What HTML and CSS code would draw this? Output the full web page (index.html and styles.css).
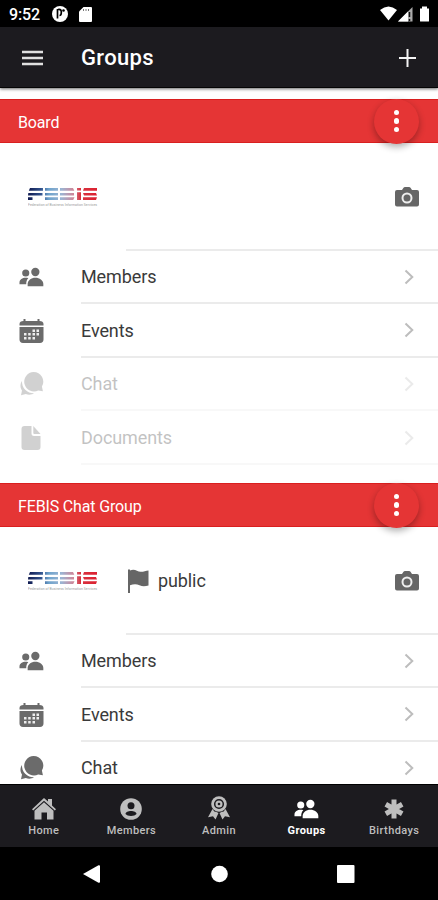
FILE: index.html
```html
<!DOCTYPE html>
<html lang="en">
<head>
<meta charset="utf-8">
<title>Groups</title>
<link rel="stylesheet" href="styles.css">
</head>
<body>
<svg class="defs" width="0" height="0" aria-hidden="true">
  <defs>
    <linearGradient id="brand" gradientUnits="userSpaceOnUse" x1="0" y1="0" x2="70" y2="0">
      <stop offset="0" stop-color="#101a50"/><stop offset=".18" stop-color="#2f4f8a"/><stop offset=".3" stop-color="#6ea3cc"/><stop offset=".48" stop-color="#9cb4d2"/><stop offset=".65" stop-color="#cf8698"/><stop offset=".75" stop-color="#d83440"/><stop offset="1" stop-color="#dc2030"/>
    </linearGradient>
    <symbol id="people" viewBox="0 0 26 20">
      <circle cx="7" cy="5.8" r="3.7"/><path d="M.5 17.500v-1.800c0-3 3-4.900 6.500-4.900 1 0 2 .2 2.700.400C8.200 12.600 7.500 14.500 7.500 17.500z"/>
      <circle cx="17" cy="4.800" r="4.300"/><path d="M9 19.500v-2.200c0-4 3.700-6.600 8-6.600s8.300 2.600 8.300 6.600v2.200z"/>
    </symbol>
    <symbol id="calendar" viewBox="0 0 24 24">
      <path d="M4 0h2v2h12V0h2v2c2.500 0 4 1 4 3v1.500H0V5c0-2 1.500-3 4-3zM0 8h24v12.500c0 2-1.300 3.500-3.500 3.500h-17C1.300 24 0 22.500 0 20.500z"/>
      <path class="cutout" d="M13 10.500h2.500V13H13zm4 0h2.500V13H17zM4.500 14H7v2.500H4.500zm4.200 0h2.500v2.500H8.700zm4.300 0h2.500v2.500H13zm4 0h2.500v2.500H17zM4.500 18H7v2.500H4.500zm4.200 0h2.500v2.500H8.700zm4.300 0h2.500v2.500H13z"/>
    </symbol>
    <symbol id="chat" viewBox="0 0 24 24">
      <path d="M14 0a9.700 9.700 0 0 1 8.400 14.600l1 4.700-4.700-.9A9.700 9.700 0 1 1 14 0z"/>
      <path d="M2.500 9a11.300 11.300 0 0 0 12 12.200c-2.500 1.700-5.600 1.900-8.200.7l-4.800 1.300 1-4.800C.3 15.300.7 11.500 2.500 9z"/>
    </symbol>
    <symbol id="document" viewBox="0 0 20 24">
      <path d="M3 0h7v7.500c0 1.500.8 2.500 2.500 2.500H19v11c0 2-1 3-3 3H3c-2 0-3-1-3-3V3c0-2 1-3 3-3z"/><path d="M11.800 0 19 8h-6c-.8 0-1.200-.4-1.200-1.200z"/>
    </symbol>
    <symbol id="camera" viewBox="0 0 24 20">
      <path d="M2 3h5l1.500-2.200Q9 0 10 0h4q1 0 1.500.800L17 3h5q2 0 2 2v12.500q0 2-2 2H2q-2 0-2-2V5q0-2 2-2z"/><circle class="ring" cx="12" cy="11" r="4.500"/>
    </symbol>
    <symbol id="chevron" viewBox="0 0 10 16"><path class="stroke" d="m1.500 1.500 6.800 6.500-6.800 6.500"/></symbol>
    <symbol id="logo" viewBox="0 0 72 21">
      <g fill="url(#brand)">
        <path d="M2 1h13v2.700H.800zM.300 6h14.200v2.400H0zM0 10.200h4.500v2.700H0zM17 1h13v2.700H17zM17 6h13v2.400H17zM17 10.200h13v2.700H17zM32 1h13l1.300 2.700H32zM32 6h14v2.400H32zM32 10.200h14.500l-1.300 2.700H32zM49 1h4v2.500h-4zM49 5.300h4v7.600h-4zM56 1h13v2.700H55zM55 6h13l1 2.400H56zM55 10.200h14l-1 2.700H55z"/>
      </g>
      <text class="tagline" x="0" y="18.500" textLength="69">Federation of Business Information Services</text>
    </symbol>
  </defs>
</svg>

<div class="phone">
  <div class="status">
    <span class="time">9:52</span>
    <svg width="16" height="16" viewBox="0 0 16 16"><circle cx="8" cy="8" r="8" fill="#fff"/><path d="M5.500 3v9.500M6 3.500c3-.5 3.500 1 3.300 3.500S8 9.500 7.500 9.500" fill="none" stroke="#000" stroke-width="1.700"/><circle cx="11.500" cy="4.500" r="1.300"/></svg>
    <svg class="sd" width="13" height="15" viewBox="0 0 13 15"><path d="M4.500 0H12q1 0 1 1v13q0 1-1 1H1q-1 0-1-1V4.500z" fill="#fff"/><path d="M4.500 2v2M7 2v2M9.500 2v2" stroke="#777"/></svg>
    <svg class="signals" width="50" height="16" viewBox="0 0 50 16"><path d="M0 4q8.500-7 17 0L8.500 14.500z" fill="#fff"/><path d="M18 15.500 32.500 1v14.500z" fill="#aaa"/><path d="M18 15.500 28 5.500v10z" fill="#fff"/><path d="M29.500 6v5m0 2v2" stroke="#111" stroke-width="1.500"/><path d="M40 2.500h2V.5h5v2h2V15q0 .5-.5.500h-8q-.5 0-.5-.500z" fill="#fff"/></svg>
  </div>

  <header class="bar">
    <svg class="menu" width="21" height="16" viewBox="0 0 21 16"><path d="M0 2h21M0 8h21M0 14h21" stroke="#e0e0e0" stroke-width="2.600"/></svg>
    <h1>Groups</h1>
    <svg class="add" width="17" height="18" viewBox="0 0 17 18"><path d="M0 9h17M8.500 0v18" stroke="#f4f4f4" stroke-width="2"/></svg>
  </header>

  <main class="content">
    <section class="group">
      <div class="group-head"><h2>Board</h2><button class="fab" aria-label="Options"><i></i><i></i><i></i></button></div>
      <div class="summary"><svg class="logo"><use href="#logo"/></svg><div class="info"><svg class="camera"><use href="#camera"/></svg></div></div>
      <div class="row"><svg class="icon people"><use href="#people"/></svg><div class="cell"><span>Members</span><svg class="chevron"><use href="#chevron"/></svg></div></div>
      <div class="row"><svg class="icon"><use href="#calendar"/></svg><div class="cell"><span>Events</span><svg class="chevron"><use href="#chevron"/></svg></div></div>
      <div class="row disabled"><svg class="icon"><use href="#chat"/></svg><div class="cell"><span>Chat</span><svg class="chevron"><use href="#chevron"/></svg></div></div>
      <div class="row disabled"><svg class="icon"><use href="#document"/></svg><div class="cell"><span>Documents</span><svg class="chevron"><use href="#chevron"/></svg></div></div>
    </section>
    <section class="group">
      <div class="group-head"><h2>FEBIS Chat Group</h2><button class="fab" aria-label="Options"><i></i><i></i><i></i></button></div>
      <div class="summary"><svg class="logo"><use href="#logo"/></svg><div class="info">
        <svg class="flag" width="21" height="24" viewBox="0 0 21 24"><path d="M0 .5h2V24H0zM2 1.500c5-2.500 7 1.500 11 1.300 2.500 0 5-1 7.500-1.300v15c-3 .8-6 1.200-9-.2-3-1.300-6-1.200-9.500 0z"/></svg>
        <span>public</span><svg class="camera"><use href="#camera"/></svg></div></div>
      <div class="row"><svg class="icon people"><use href="#people"/></svg><div class="cell"><span>Members</span><svg class="chevron"><use href="#chevron"/></svg></div></div>
      <div class="row"><svg class="icon"><use href="#calendar"/></svg><div class="cell"><span>Events</span><svg class="chevron"><use href="#chevron"/></svg></div></div>
      <div class="row"><svg class="icon"><use href="#chat"/></svg><div class="cell"><span>Chat</span><svg class="chevron"><use href="#chevron"/></svg></div></div>
    </section>
  </main>

  <nav class="tabs">
    <a class="tab"><svg width="24" height="22" viewBox="0 0 24 22"><path d="M12 0 16 3.600V1h4v6.500l4 3.800-1.200 1.300L12 2.800 1.200 12.600 0 11.300z"/><path d="M12 4.200 21.500 12.700V21.500h-6.500v-7H9.500v7H2.500v-8.800z"/></svg><span>Home</span></a>
    <a class="tab"><svg width="22" height="22" viewBox="0 0 22 22"><circle cx="11" cy="11" r="10.800"/><circle class="hole" cx="11" cy="7.800" r="3.500"/><path class="hole" d="M5.500 16c0-4 11-4 11 0-1 1.300-3 2-5.500 2s-4.500-.7-5.500-2z"/></svg><span>Members</span></a>
    <a class="tab"><svg width="22" height="24" viewBox="0 0 22 24"><circle cx="11" cy="8" r="7.800"/><circle class="hole-ring" cx="11" cy="8" r="4.300"/><circle class="hole" cx="11" cy="8" r="1.300"/><path d="m4.500 13 1.800 2.500 2.200.6 2 .9L7.500 23.500 5 20.300 0 21.200zM17.500 13l-1.800 2.500-2.200.6-2 .9 3 6.500 2.500-3.200 5 .900z"/></svg><span>Admin</span></a>
    <a class="tab active"><svg width="25" height="20"><use href="#people"/></svg><span>Groups</span></a>
    <a class="tab"><svg width="20" height="22" viewBox="0 0 20 22"><path d="M10 1.500v19M1.800 6.250l16.400 9.500M1.800 15.750l16.400-9.500" fill="none" stroke="currentColor" stroke-width="5" stroke-linejoin="round"/></svg><span>Birthdays</span></a>
  </nav>
  <div class="system">
    <svg width="17" height="18" viewBox="0 0 17 18"><path d="M0 9 15.500.3Q17 0 17 1v16q0 1-1.500.700z" fill="#fff"/></svg>
    <svg width="18" height="18" viewBox="0 0 18 18"><circle cx="9.500" cy="9" r="8.300" fill="#fff"/></svg>
    <svg width="18" height="18" viewBox="0 0 18 18"><rect width="17.500" height="18" rx="1" fill="#fff"/></svg>
  </div>
</div>
</body>
</html>
```
FILE: styles.css
```css
* { box-sizing: border-box; }
body { margin: 0; font-family: Roboto, "Liberation Sans", sans-serif; color: #3a3a3a; background: #fff; }
h1, h2 { margin: 0; font-weight: 500; }
svg { display: block; flex: none; }
.defs { position: absolute; }
.phone { width: 438px; height: 900px; display: flex; flex-direction: column; overflow: hidden; }

.status { height: 27px; flex: none; background: #000; color: #fff; display: flex; align-items: center; padding: 1px 8px 0 9px; }
.time { font-size: 16px; font-weight: 500; width: 43px; letter-spacing: -.15px; }
.sd { margin-left: 11px; }
.signals { margin-left: auto; }

.bar { height: 61px; flex: none; background: #1c1b1f; border-bottom: 1px solid #050505; display: flex; align-items: center; padding: 1px 22px 0; box-shadow: 0 1px 3px rgba(0,0,0,.6); position: relative; }
.bar h1 { margin: 0 0 0 38px; color: #fff; font-size: 22px; letter-spacing: .35px; }
.add { margin-left: auto; }

.content { flex: 1; min-height: 0; overflow: hidden; padding-top: 11px; }
.group { height: 384px; }
.group-head { height: 44px; background: #e53535; border-top: 1px solid #d91f1f; border-bottom: 1px solid #d91f1f; display: flex; align-items: center; justify-content: space-between; padding: 0 19px 0 18px; }
.group-head h2 { color: #fff; font-size: 16px; font-weight: 400; letter-spacing: -.15px; padding-top: 2px; }
.fab { width: 45px; height: 45px; border: 0; padding: 0; border-radius: 50%; background: #e53535; box-shadow: 0 3px 7px rgba(0,0,0,.32); display: flex; flex-direction: column; align-items: center; justify-content: center; gap: 2.700px; flex: none; position: relative; }
.fab i { width: 5.700px; height: 5.700px; border-radius: 50%; background: #fff; }

.summary { height: 107.500px; display: flex; padding-left: 28px; align-items: center; }
.logo { width: 72px; height: 21px; margin: 2px 26px 0 0; }
.tagline { font-size: 3.400px; fill: #999; }
.info { flex: 1; height: 100%; border-bottom: 2px solid #ebebeb; display: flex; align-items: center; padding: 2px 19px 0 2px; font-size: 18px; letter-spacing: -.1px; }
.info span { margin-left: 9px; }
.flag { fill: #666; }
.camera { width: 24px; height: 20px; margin-left: auto; fill: #666; }
.ring { fill: #666; stroke: #eee; stroke-width: 2; }

.row { height: 53.600px; display: flex; align-items: center; padding-left: 19px; }
.icon { width: 25px; height: 24px; fill: #6b6b6b; }
.icon.people { height: 20px; }
.cutout { fill: #eee; }
.cell { flex: 1; height: 100%; margin-left: 37px; display: flex; align-items: center; justify-content: space-between; border-bottom: 2px solid #ebebeb; padding: 1px 24px 0 0; font-size: 18px; letter-spacing: -.1px; }
.chevron { width: 10px; height: 16px; }
.stroke { fill: none; stroke: #bdbdbd; stroke-width: 2; }
.disabled { opacity: .3; }

.tabs { height: 63px; flex: none; background: #1c1b1f; border-top: 1px solid #000; display: flex; color: #bebebe; }
.tab { flex: 1; display: flex; flex-direction: column; align-items: center; justify-content: flex-end; gap: 4px; padding-bottom: 10px; font-size: 11px; font-weight: 500; letter-spacing: .4px; line-height: 13px; fill: currentColor; }
.tab.active { color: #fff; font-weight: 700; }
.tab.active svg { margin-bottom: 1px; }
.hole { fill: #1c1b1f; }
.hole-ring { fill: none; stroke: #1c1b1f; stroke-width: 1.500; }
.system { height: 53px; flex: none; background: #000; display: flex; align-items: center; justify-content: space-between; padding: 0 83px 0 83px; }
```
